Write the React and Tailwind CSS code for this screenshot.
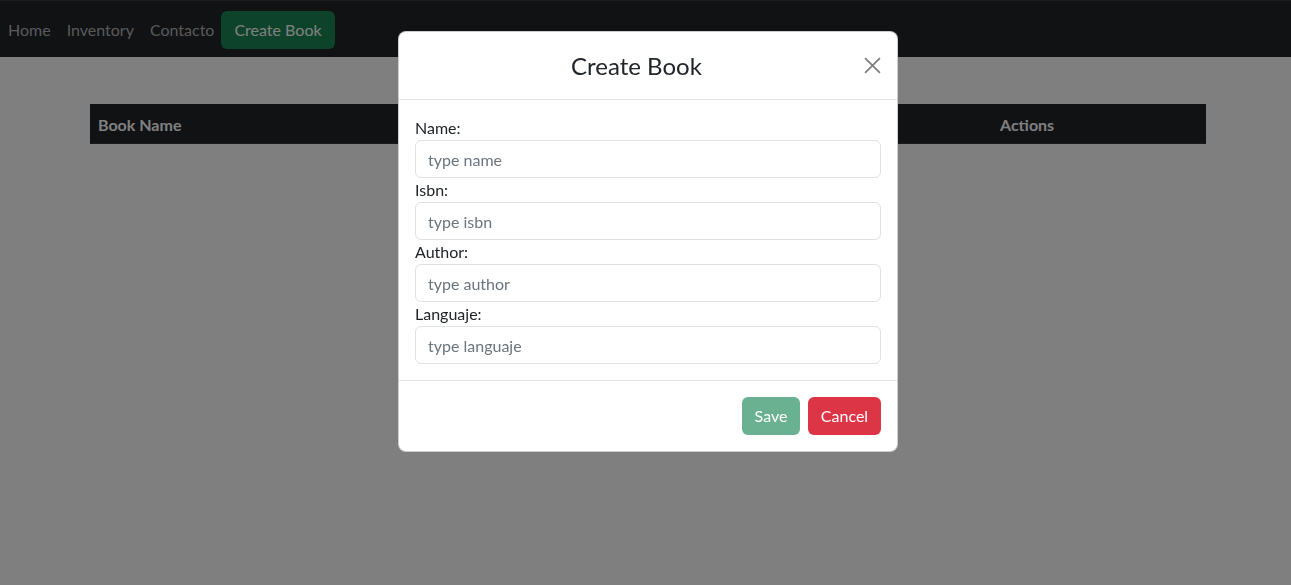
import React from "react";

const fields = [
  { label: "Name:", placeholder: "type name" },
  { label: "Isbn:", placeholder: "type isbn" },
  { label: "Author:", placeholder: "type author" },
  { label: "Languaje:", placeholder: "type languaje" },
];

const columns = ["Book Name", "Isbn", "Author", "Languaje", "Actions"];

function Navbar() {
  return (
    <nav className="h-[57px] bg-[#212529] border-t border-[#3a3d40] flex items-center pt-[2px]">
      <div className="flex items-center text-[16px] text-[#b3b4b6]">
        <a className="px-2 py-2">Home</a>
        <a className="px-2 py-2">Inventory</a>
        <a className="pl-2 pr-[7px] py-2">Contacto</a>
        <button className="h-[38px] px-[13px] rounded-md bg-[#198754] text-white">
          Create Book
        </button>
      </div>
    </nav>
  );
}

function BookTable() {
  return (
    <div className="ml-[90px] mt-[47px] w-[1116px]">
      <div className="grid grid-cols-[320px_200px_200px_182px_1fr] h-10 items-center pt-[2px] bg-[#212529] text-white font-bold border-b border-[#32383e]">
        {columns.map((c) => (
          <div key={c} className="px-2">
            {c}
          </div>
        ))}
      </div>
    </div>
  );
}

function CreateBookModal() {
  return (
    <div className="fixed inset-0 bg-black/50">
      <div className="ml-[398px] mt-[31px] w-[500px] bg-white rounded-lg border border-black/20">
        <div className="h-[68px] flex items-center px-4 border-b border-[#dee2e6]">
          <h4 className="flex-1 text-center text-[24px] text-[#212529]">Create Book</h4>
          <button className="w-[23px] h-[24px] flex items-center justify-end">
            <svg viewBox="0 0 16 16" className="w-[17px] h-[17px]" stroke="#7d7d7d" strokeWidth="1.6">
              <path d="M1 1 15 15M15 1 1 15" />
            </svg>
          </button>
        </div>
        <div className="px-4 pt-4 pb-4">
          {fields.map((f) => (
            <div key={f.label}>
              <label className="block leading-6 text-[#212529]">{f.label}</label>
              <input
                className="block w-full h-[38px] px-3 rounded-md border border-[#dee2e6] placeholder:text-[#6c757d] outline-none"
                placeholder={f.placeholder}
              />
            </div>
          ))}
        </div>
        <div className="border-t border-[#dee2e6] flex justify-end gap-2 px-4 pt-4 pb-4">
          <button className="h-[38px] w-[58px] rounded-md bg-[#198754]/65 text-white">Save</button>
          <button className="h-[38px] w-[73px] rounded-md bg-[#dc3545] text-white">Cancel</button>
        </div>
      </div>
    </div>
  );
}

export default function App() {
  return (
    <div className="min-h-[585px] bg-white font-['Lato',sans-serif] text-[16px]">
      <Navbar />
      <BookTable />
      <CreateBookModal />
    </div>
  );
}
